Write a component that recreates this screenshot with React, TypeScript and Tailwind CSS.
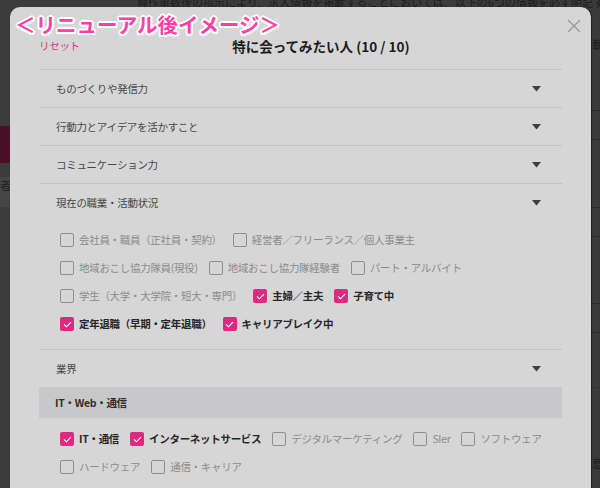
import React from "react";

function Box({ checked }: { checked?: boolean }) {
  if (checked) {
    return (
      <span className="w-[14px] h-[14px] shrink-0 rounded-[2px] bg-[#dc2a80] flex items-center justify-center">
        <svg width="9" height="7" viewBox="0 0 9 7">
          <path d="M1 3.4 L3.4 5.8 L8 1.2" stroke="#fff" strokeWidth="1.1" fill="none" />
        </svg>
      </span>
    );
  }
  return <span className="w-[14px] h-[14px] shrink-0 rounded-[2px] border-[1.5px] border-[#8e8e8e]" />;
}

function Check({ label, checked }: { label: string; checked?: boolean }) {
  return (
    <div className="flex items-center gap-[5px]">
      <Box checked={checked} />
      <span className={checked ? "text-[#262626] font-semibold" : "text-[#8b8b8b]"}>{label}</span>
    </div>
  );
}

function Row({ items }: { items: [string, boolean?][] }) {
  return (
    <div className="h-[28px] flex items-center gap-x-[11px] pl-[21px]">
      {items.map(([l, c]) => (
        <Check key={l} label={l} checked={c} />
      ))}
    </div>
  );
}

function Arrow() {
  return (
    <svg width="9" height="6" viewBox="0 0 9 6">
      <path d="M0 0 H9 L4.5 5.5 Z" fill="#3d3d47" />
    </svg>
  );
}

function Section({ title }: { title: string }) {
  return (
    <div className="h-[38px] border-t border-[#c3c3c3] flex items-center justify-between pl-[17px] pr-[21px] text-[#474747]">
      <span>{title}</span>
      <Arrow />
    </div>
  );
}

export default function App() {
  return (
    <div className="relative w-[600px] h-[488px] overflow-hidden bg-[#3b3b3b] font-['Noto_Sans_CJK_JP','Noto_Sans',sans-serif]">
      {/* backdrop page */}
      <div className="absolute left-[137px] top-[-6px] text-[11px] text-[#1d1d1d] whitespace-nowrap">
        興作単数後の指示により、求人情報を掲載することにおいては、以下の6つの情報を必ず明記すること
      </div>
      <div className="absolute left-0 top-[126px] w-[10px] h-[37px] bg-[#4a1028]" />
      <div className="absolute left-0 top-[177px] w-[10px] h-[30px] bg-[#454545] text-[11px] text-[#222] overflow-hidden">者</div>
      <div className="absolute right-0 top-[36px] w-[8px] text-[11px] text-[#1d1d1d] overflow-hidden whitespace-nowrap">載</div>
      <div className="absolute right-0 top-[110px] w-[9px] h-[30px] border-y border-[#2c2c2c]" />
      <div className="absolute right-0 top-[207px] w-[9px] h-[30px] border-y border-[#2c2c2c]" />
      <div className="absolute right-0 top-[303px] w-[9px] h-[30px] border-y border-[#2c2c2c]" />
      <div className="absolute right-0 top-[387px] w-[9px] h-px bg-[#333]" />
      <div className="absolute right-0 top-[455px] w-[8px] text-[11px] text-[#1d1d1d] overflow-hidden whitespace-nowrap">意</div>

      {/* modal */}
      <div className="absolute left-[10px] top-[7px] w-[581px] h-[500px] rounded-[10px] bg-[#d6d6d6] shadow-[1px_0_1px_rgba(0,0,0,0.5)]">
        <button className="absolute right-[9px] top-[11px] w-[16px] h-[16px] flex items-center justify-center">
          <svg width="14" height="14" viewBox="0 0 14 14">
            <path d="M1 1 L13 13 M13 1 L1 13" stroke="#9a9a9a" strokeWidth="1.4" />
          </svg>
        </button>
        <div className="px-[29px] text-[10.5px] tracking-[-0.3px]">
          <div className="h-[62px] pt-[16px] flex items-center">
            <span className="text-[#d8307f]">リセット</span>
            <span className="flex-1 text-center text-[13.5px] font-bold text-[#1b1b1b] tracking-normal">
              特に会ってみたい人 (10 / 10)
            </span>
          </div>
          <Section title="ものづくりや発信力" />
          <Section title="行動力とアイデアを活かすこと" />
          <Section title="コミュニケーション力" />
          <Section title="現在の職業・活動状況" />
          <div className="pt-[5px] pb-[11px]">
            <Row items={[["会社員・職員（正社員・契約）"], ["経営者／フリーランス／個人事業主"]]} />
            <Row items={[["地域おこし協力隊員(現役)"], ["地域おこし協力隊経験者"], ["パート・アルバイト"]]} />
            <Row items={[["学生（大学・大学院・短大・専門）"], ["主婦／主夫", true], ["子育て中", true]]} />
            <Row items={[["定年退職（早期・定年退職）", true], ["キャリアブレイク中", true]]} />
          </div>
          <Section title="業界" />
          <div className="h-[31px] bg-[#c8c8ca] flex items-center pl-[16px] font-bold text-[#2e2e2e]">
            IT・Web・通信
          </div>
          <div className="pt-[7px]">
            <Row
              items={[
                ["IT・通信", true],
                ["インターネットサービス", true],
                ["デジタルマーケティング"],
                ["SIer"],
                ["ソフトウェア"],
              ]}
            />
            <Row items={[["ハードウェア"], ["通信・キャリア"]]} />
          </div>
        </div>
      </div>

      {/* overlay label */}
      <div className="absolute left-[15px] top-[9px] text-[20.5px] font-bold text-[#ff3fa8] whitespace-nowrap leading-[30px] [text-shadow:2px_0_#fff,-2px_0_#fff,0_2px_#fff,0_-2px_#fff,1.5px_1.5px_#fff,-1.5px_1.5px_#fff,1.5px_-1.5px_#fff,-1.5px_-1.5px_#fff]">
        ＜リニューアル後イメージ＞
      </div>
    </div>
  );
}
